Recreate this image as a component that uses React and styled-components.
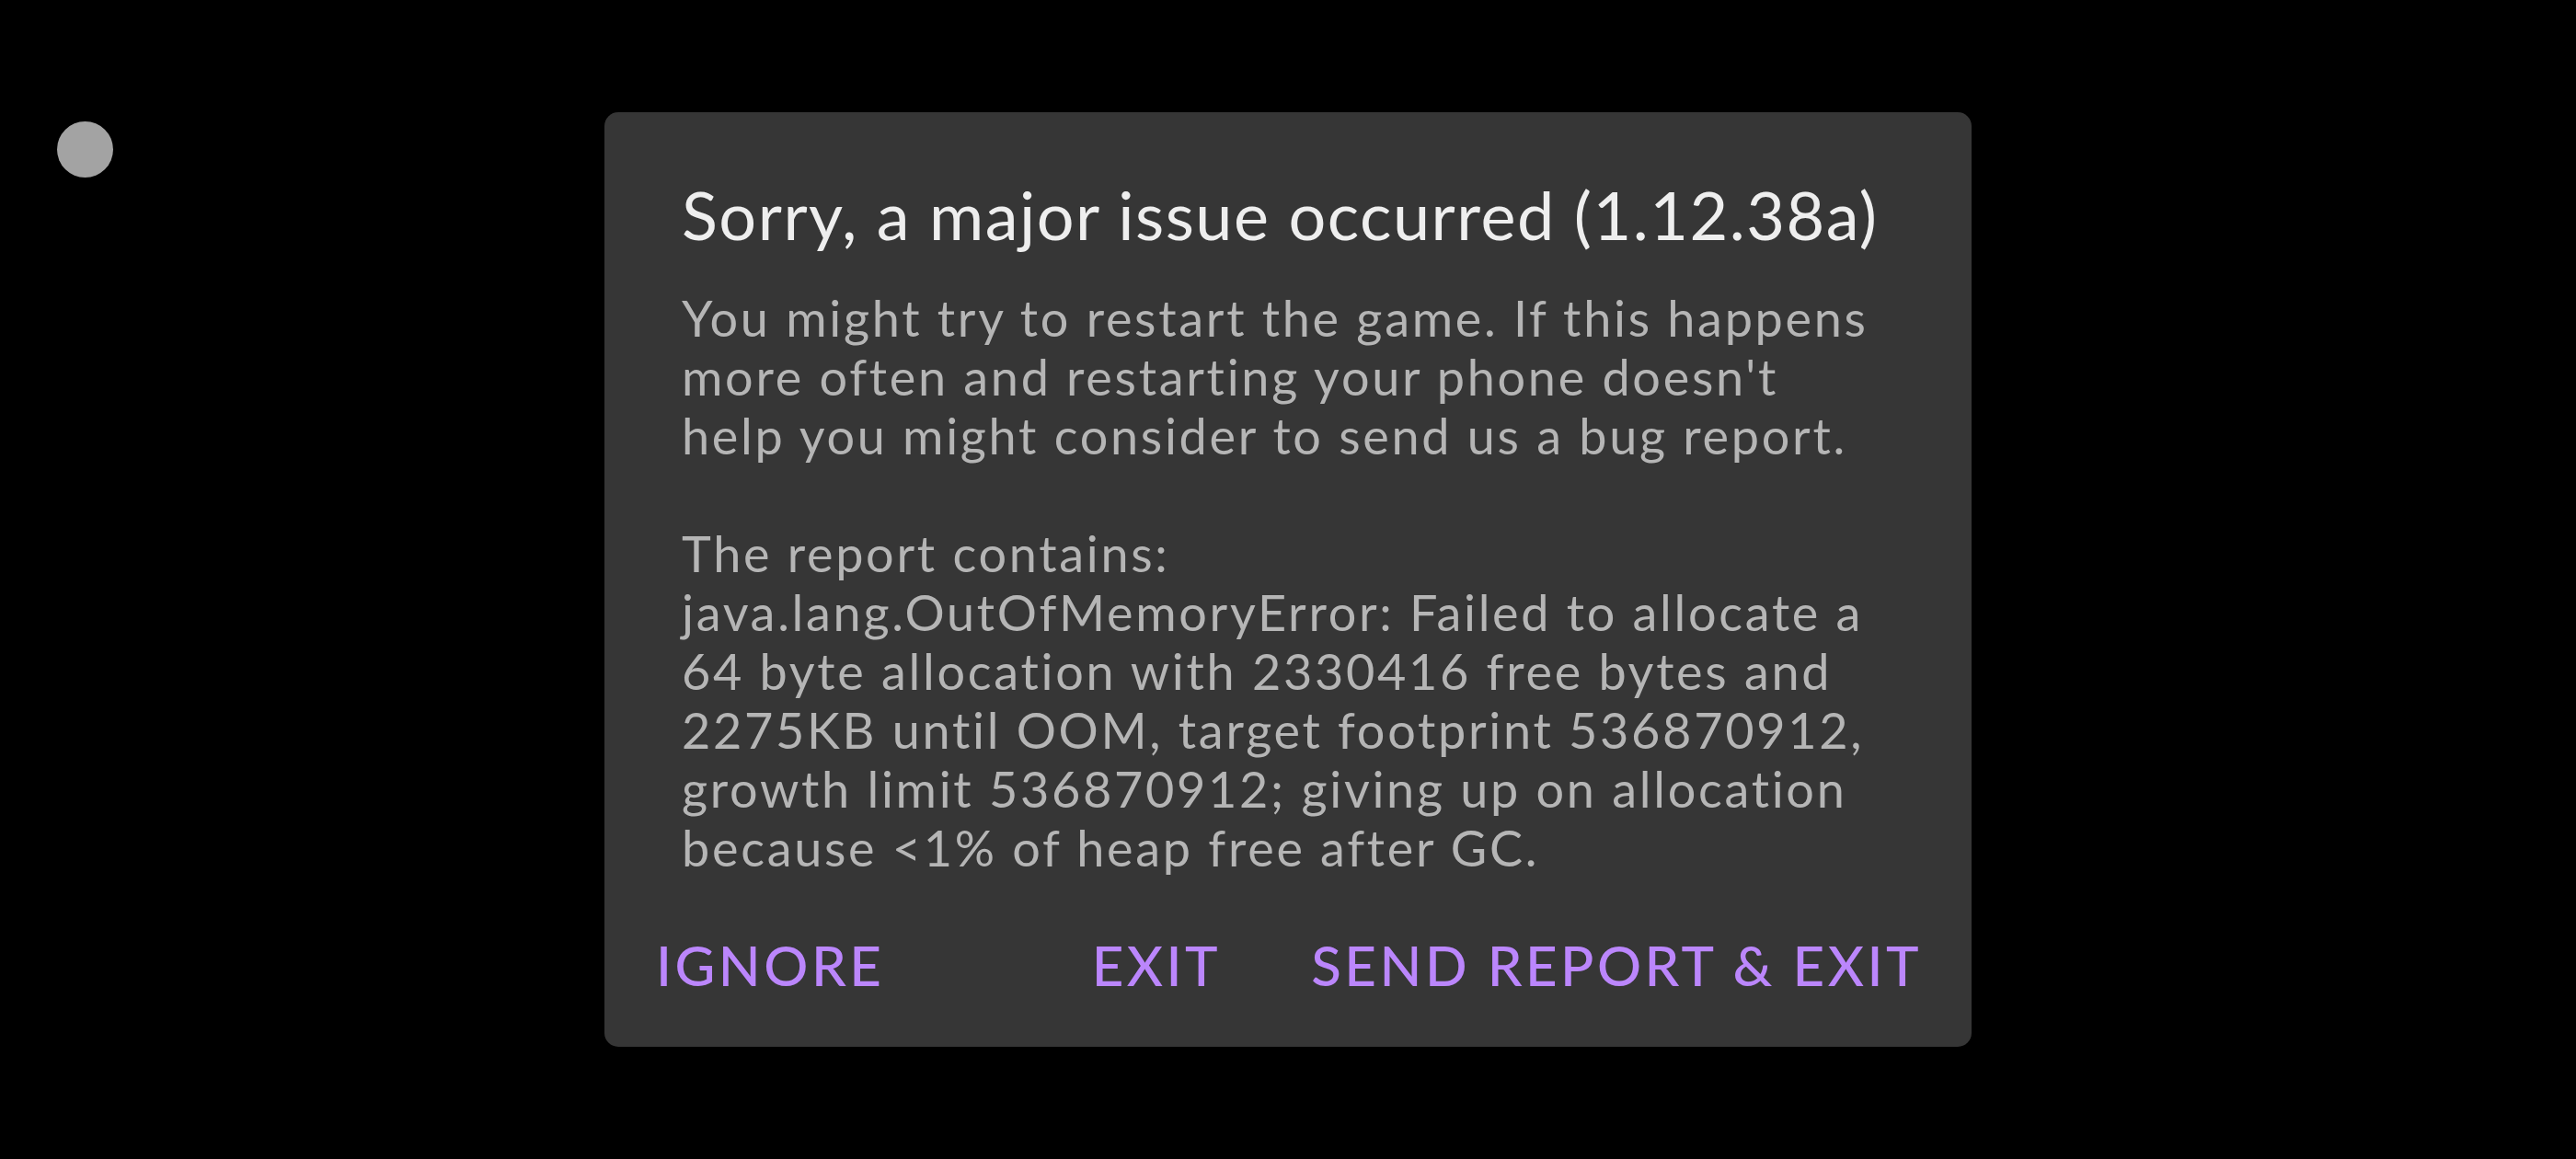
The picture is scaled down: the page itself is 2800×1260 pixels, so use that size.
import React from "react";
import styled, { createGlobalStyle } from "styled-components";

const GlobalStyle = createGlobalStyle`
  html, body {
    margin: 0;
    padding: 0;
    background: #000;
  }
`;

const messageLines = [
  "You might try to restart the game. If this happens",
  "more often and restarting your phone doesn't",
  "help you might consider to send us a bug report.",
  "",
  "The report contains:",
  "java.lang.OutOfMemoryError: Failed to allocate a",
  "64 byte allocation with 2330416 free bytes and",
  "2275KB until OOM, target footprint 536870912,",
  "growth limit 536870912; giving up on allocation",
  "because <1% of heap free after GC.",
];

const App = () => {
  return (
    <>
      <GlobalStyle />
      <Screen>
        <FloatingDot />
        <Dialog>
          <Title>Sorry, a major issue occurred (1.12.38a)</Title>
          <Message>
            {messageLines.map((line, i) => (
              <Line key={i}>{line || "\u00a0"}</Line>
            ))}
          </Message>
          <Actions>
            <ActionBtn>IGNORE</ActionBtn>
            <RightActions>
              <ActionBtn>EXIT</ActionBtn>
              <ActionBtn>SEND REPORT &amp; EXIT</ActionBtn>
            </RightActions>
          </Actions>
        </Dialog>
      </Screen>
    </>
  );
};

export default App;

const Screen = styled.div`
  position: relative;
  width: 2800px;
  height: 1260px;
  background: #000;
  display: flex;
  align-items: center;
  justify-content: center;
  font-family: Lato, "Noto Sans", sans-serif;
`;

const FloatingDot = styled.div`
  position: absolute;
  left: 62px;
  top: 132px;
  width: 61px;
  height: 61px;
  border-radius: 50%;
  background: #a3a3a3;
`;

const Dialog = styled.div`
  width: 1486px;
  box-sizing: border-box;
  padding: 68px 54px 53px 56px;
  background: #363636;
  border-radius: 15px;
  display: flex;
  flex-direction: column;
`;

const Title = styled.div`
  padding-left: 28px;
  font-size: 72px;
  line-height: 86px;
  letter-spacing: 1.5px;
  color: #eeeeee;
  white-space: nowrap;
`;

const Message = styled.div`
  margin-top: 38px;
  padding-left: 28px;
  font-size: 54px;
  line-height: 64px;
  letter-spacing: 2.7px;
  color: #b5b5b5;
`;

const Line = styled.div`
  white-space: nowrap;
`;

const Actions = styled.div`
  margin-top: 59px;
  display: flex;
  justify-content: space-between;
  align-items: center;
`;

const RightActions = styled.div`
  display: flex;
  gap: 98px;
`;

const ActionBtn = styled.button`
  padding: 0;
  border: none;
  background: none;
  font-family: inherit;
  font-size: 60px;
  line-height: 72px;
  font-weight: 500;
  letter-spacing: 3.5px;
  color: #bb86fc;
`;
